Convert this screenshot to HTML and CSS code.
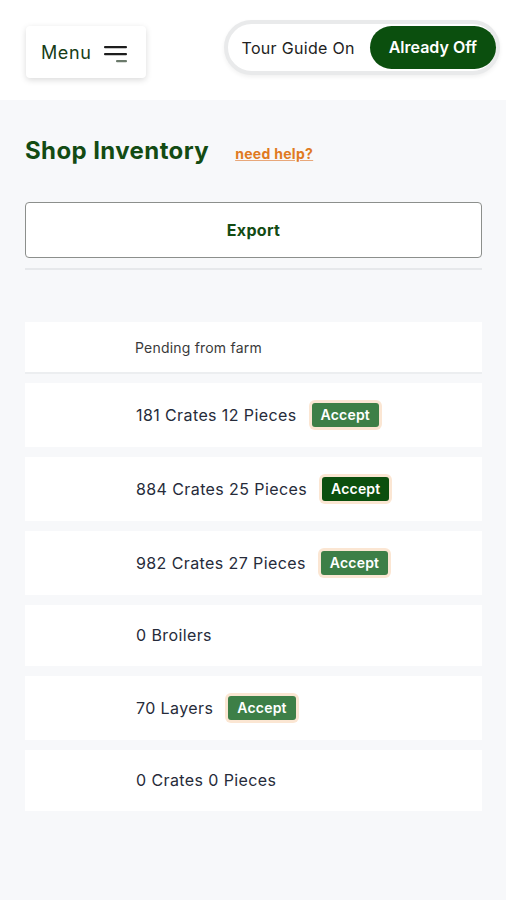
FILE: index.html
```html
<!DOCTYPE html>
<html lang="en">
<head>
<meta charset="utf-8">
<title>Shop Inventory</title>
<link rel="stylesheet" href="styles.css">
</head>
<body>
<header class="topbar">
  <button class="menu-btn">
    <span class="menu-label">Menu</span>
    <svg class="menu-icon" width="24" height="20" viewBox="0 0 24 20">
      <rect x="0" y="3" width="23" height="2.2" rx="1" fill="#1d1d1d"/>
      <rect x="0" y="10" width="23" height="2.2" rx="1" fill="#1d1d1d"/>
      <rect x="12" y="17" width="11" height="2.2" rx="1" fill="#6b7a6b"/>
    </svg>
  </button>
  <div class="tour-toggle">
    <span class="tour-on">Tour Guide On</span>
    <span class="tour-off">Already Off</span>
  </div>
</header>
<main class="content">
  <div class="title-row">
    <h1 class="title">Shop Inventory</h1>
    <a class="help" href="#">need help?</a>
  </div>
  <button class="export-btn">Export</button>
  <div class="divider"></div>
  <div class="list">
    <div class="list-head">Pending from farm</div>
    <div class="row"><span>181 Crates 12 Pieces</span><span class="accept">Accept</span></div>
    <div class="row"><span>884 Crates 25 Pieces</span><span class="accept dark">Accept</span></div>
    <div class="row"><span>982 Crates 27 Pieces</span><span class="accept">Accept</span></div>
    <div class="row"><span>0 Broilers</span></div>
    <div class="row"><span>70 Layers</span><span class="accept">Accept</span></div>
    <div class="row"><span>0 Crates 0 Pieces</span></div>
  </div>
</main>
</body>
</html>
```
FILE: styles.css
```css
* { box-sizing: border-box; }
html, body { margin: 0; padding: 0; }
body {
  background: #f7f8fa;
  font-family: Inter, "Noto Sans", sans-serif;
  min-height: 900px;
}
.topbar {
  background: #ffffff;
  height: 100px;
  display: flex;
  justify-content: space-between;
  align-items: flex-start;
  padding: 20px 6px 0 26px;
}
.menu-btn {
  margin-top: 6px;
  width: 120px;
  height: 52px;
  background: #fff;
  border: none;
  border-radius: 4px;
  box-shadow: 0 2px 6px rgba(0,0,0,0.15);
  display: flex;
  align-items: center;
  padding: 0 0 0 15px;
  gap: 13px;
  font-family: Inter, sans-serif;
}
.menu-label {
  font-size: 18px;
  color: #173d17;
  letter-spacing: 0.6px;
}
.menu-icon { display: block; margin-top: 2px; }
.tour-toggle {
  display: flex;
  align-items: center;
  height: 55px;
  border: 4px solid #e9eaeb;
  border-radius: 28px;
  background: #fff;
  padding: 0 0 0 14px;
  gap: 15px;
  box-shadow: 0 2px 4px rgba(0,0,0,0.06);
}
.tour-on {
  font-size: 16px;
  color: #222;
  letter-spacing: 0.3px;
}
.tour-off {
  background: #0b4f0e;
  color: #fff;
  font-size: 16px;
  font-weight: 600;
  height: 43px;
  line-height: 43px;
  padding: 0 19px;
  border-radius: 22px;
}
.content { padding: 0 24px 0 25px; }
.title-row {
  display: flex;
  align-items: baseline;
  gap: 26px;
  padding-top: 36px;
  height: 102px;
}
.title {
  margin: 0;
  font-size: 24px;
  font-weight: 700;
  color: #134b13;
  letter-spacing: 0.4px;
}
.help {
  color: #e07a22;
  font-size: 14px;
  font-weight: 700;
  letter-spacing: 0.3px;
  text-decoration: underline;
  text-decoration-color: #e8a77a;
}
.export-btn {
  display: block;
  width: 100%;
  height: 56px;
  background: #fff;
  border: 1.5px solid #8c8f8c;
  border-radius: 4px;
  font-family: Inter, sans-serif;
  font-size: 16px;
  font-weight: 700;
  color: #134b13;
  letter-spacing: 0.3px;
}
.divider {
  height: 2px;
  background: #e6e8eb;
  margin-top: 10px;
}
.list {
  margin-top: 52px;
  display: flex;
  flex-direction: column;
  gap: 10px;
}
.list-head {
  background: #fff;
  height: 52px;
  display: flex;
  align-items: center;
  padding-left: 110px;
  font-size: 14px;
  letter-spacing: 0.2px;
  color: #3a3a3a;
  border-bottom: 2px solid #eceef0;
  margin-bottom: -1px;
}
.row {
  background: #fff;
  display: flex;
  align-items: center;
  padding: 20px 0 20px 111px;
  line-height: 21px;
  gap: 15px;
  font-size: 16px;
  letter-spacing: 0.4px;
  color: #262b3a;
}
.accept {
  background: #3d7f47;
  color: #fff;
  font-size: 14px;
  line-height: 18px;
  font-weight: 600;
  letter-spacing: 0.2px;
  padding: 3px 9px;
  border-radius: 3px;
  box-shadow: 0 0 0 3px #fbe6d3;
}
.accept.dark { background: #0b4f0e; }
```
